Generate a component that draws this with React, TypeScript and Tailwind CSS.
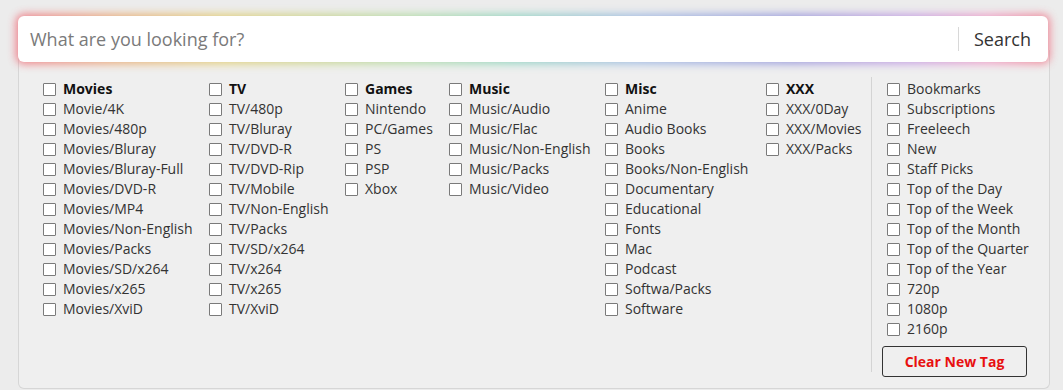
import React from "react";

const cols: { w: string; head: string; items: string[] }[] = [
  { w: "w-[166px]", head: "Movies", items: ["Movie/4K", "Movies/480p", "Movies/Bluray", "Movies/Bluray-Full", "Movies/DVD-R", "Movies/MP4", "Movies/Non-English", "Movies/Packs", "Movies/SD/x264", "Movies/x265", "Movies/XviD"] },
  { w: "w-[136px]", head: "TV", items: ["TV/480p", "TV/Bluray", "TV/DVD-R", "TV/DVD-Rip", "TV/Mobile", "TV/Non-English", "TV/Packs", "TV/SD/x264", "TV/x264", "TV/x265", "TV/XviD"] },
  { w: "w-[104px]", head: "Games", items: ["Nintendo", "PC/Games", "PS", "PSP", "Xbox"] },
  { w: "w-[156px]", head: "Music", items: ["Music/Audio", "Music/Flac", "Music/Non-English", "Music/Packs", "Music/Video"] },
  { w: "w-[161px]", head: "Misc", items: ["Anime", "Audio Books", "Books", "Books/Non-English", "Documentary", "Educational", "Fonts", "Mac", "Podcast", "Softwa/Packs", "Software"] },
  { w: "w-[105px]", head: "XXX", items: ["XXX/0Day", "XXX/Movies", "XXX/Packs"] },
];

const extra = ["Bookmarks", "Subscriptions", "Freeleech", "New", "Staff Picks", "Top of the Day", "Top of the Week", "Top of the Month", "Top of the Quarter", "Top of the Year", "720p", "1080p", "2160p"];

function Row({ label, bold }: { label: string; bold?: boolean }) {
  return (
    <label className="flex items-center h-5 whitespace-nowrap">
      <span className="w-[13px] h-[13px] border border-[#7a7a7a] bg-white rounded-[1px] shrink-0" />
      <span className={"ml-[7px] text-[14px] leading-5 " + (bold ? "font-bold text-[#111]" : "text-[#333]")}>{label}</span>
    </label>
  );
}

export default function App() {
  return (
    <div className="w-[1063px] h-[390px] bg-[#ececec] overflow-hidden" style={{ fontFamily: '"Open Sans", "Noto Sans", sans-serif' }}>
      <div className="pt-[16px] pl-[18px] w-[1050px]">
        <div className="relative z-10 w-[1030px] h-[46px]">
          <div
            className="absolute -inset-[2px] rounded-[8px] blur-[4px] opacity-80"
            style={{ background: "linear-gradient(to right, #f06070, #e8a060 10%, #e0c860 20%, #a8d898 38%, #80d0b8 48%, #90b0e0 60%, #8888d8 75%, #c090e0 87%, #f090c0 94%, #f07080)" }}
          />
          <div className="relative h-full bg-white rounded-[6px] flex items-center">
            <div className="flex-1 pl-[12px] text-[18px] text-[#7a7a7a]">What are you looking for?</div>
            <div className="w-px h-[24px] bg-[#d8d8d8]" />
            <div className="pl-[15px] pr-[17px] text-[18px] text-[#333]">Search</div>
          </div>
        </div>
        <div className="-mt-[12px] h-[339px] border border-[#d6d6d6] border-t-0 rounded-b-[6px] bg-[#efefef] flex pt-[29px] pl-[24px]">
          {cols.map((c) => (
            <div key={c.head} className={c.w + " shrink-0"}>
              <Row label={c.head} bold />
              {c.items.map((i) => (
                <Row key={i} label={i} />
              ))}
            </div>
          ))}
          <div className="w-px h-[295px] -mt-[2px] bg-[#d4d4d4]" />
          <div className="pl-[15px]">
            {extra.map((i) => (
              <Row key={i} label={i} />
            ))}
            <button className="mt-[7px] -ml-[5px] w-[145px] h-[31px] border border-[#333] rounded-[3px] text-[14px] font-bold text-[#e81010]">
              Clear New Tag
            </button>
          </div>
        </div>
      </div>
    </div>
  );
}
